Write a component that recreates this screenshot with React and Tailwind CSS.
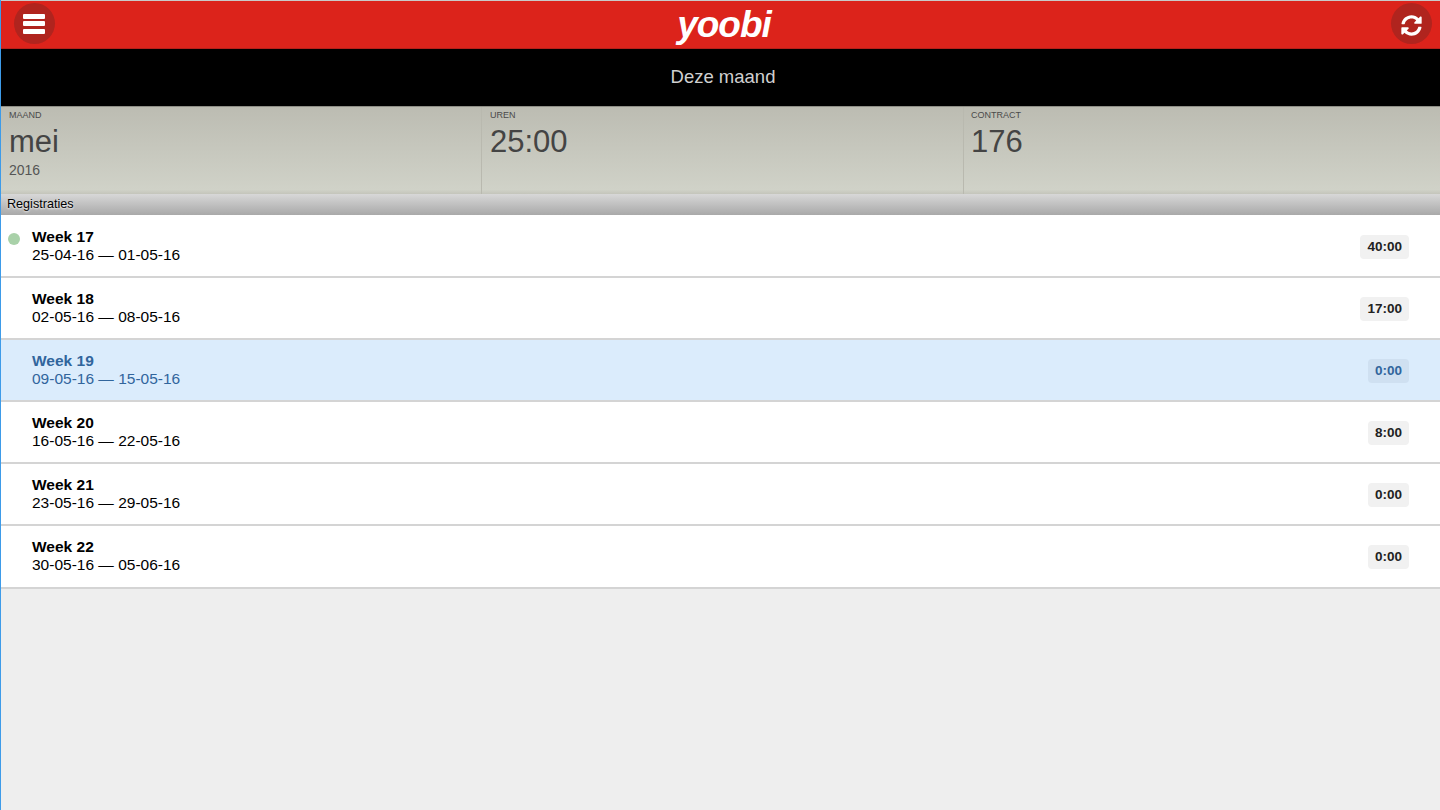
import { FaSyncAlt } from "react-icons/fa"

const weeks = [
  { name: "Week 17", range: "25-04-16 — 01-05-16", hours: "40:00", dot: true },
  { name: "Week 18", range: "02-05-16 — 08-05-16", hours: "17:00" },
  { name: "Week 19", range: "09-05-16 — 15-05-16", hours: "0:00", active: true },
  { name: "Week 20", range: "16-05-16 — 22-05-16", hours: "8:00" },
  { name: "Week 21", range: "23-05-16 — 29-05-16", hours: "0:00" },
  { name: "Week 22", range: "30-05-16 — 05-06-16", hours: "0:00" },
]

const stats = [
  { label: "MAAND", value: "mei", sub: "2016", box: "w-[481px] pl-[8px] border-r" },
  { label: "UREN", value: "25:00", box: "w-[482px] pl-[8px] border-r" },
  { label: "CONTRACT", value: "176", box: "flex-1 pl-[7px]" },
]

function RoundButton({ children }) {
  return (
    <button className="w-[41px] h-[41px] rounded-full bg-[#b0241e] flex items-center justify-center">
      {children}
    </button>
  )
}

function MenuIcon() {
  return (
    <div className="w-[22px] flex flex-col gap-[2.5px] -ml-[1px]">
      <div className="h-[5px] bg-white rounded-[1px]" />
      <div className="h-[5px] bg-white rounded-[1px]" />
      <div className="h-[5px] bg-white rounded-[1px]" />
    </div>
  )
}

export default function App() {
  return (
    <div className="min-h-screen h-[810px] overflow-hidden bg-[#eeeeee] border-l border-[#3d9be9] font-['Liberation_Sans',Arial,sans-serif]">
      <header className="h-[49px] border-t border-[#c9c9c9] border-b border-b-[#b5201a] bg-[#dc231b] pl-[13px] pr-[8px] pb-[2px] flex items-center justify-between">
        <RoundButton><MenuIcon /></RoundButton>
        <span className="text-white text-[37px] font-bold italic leading-[42px] tracking-[-1px] ml-[2px] mt-[2px]">yoobi</span>
        <RoundButton><FaSyncAlt className="text-white text-[21px] mt-[3px]" /></RoundButton>
      </header>

      <div className="h-[57px] bg-black flex items-center justify-center pl-[5px] pb-[2px] text-[18.5px] text-[#d0d0d0]">
        Deze maand
      </div>

      <div className="h-[88px] flex border-t border-[#8e8e86] bg-gradient-to-b from-[#bcbcb2] via-[#d0d2c8] via-95% to-[#c4c5bb]">
        {stats.map((s) => (
          <div key={s.label} className={`${s.box} pt-[3px] border-[#b9b9af] text-[#444]`}>
            <div className="text-[9px] leading-[11px] text-[#4a4a4a]">{s.label}</div>
            <div className="text-[31px] leading-[42px]">{s.value}</div>
            {s.sub && <div className="text-[14px] leading-[15px] text-[#555]">{s.sub}</div>}
          </div>
        ))}
      </div>

      <div className="h-[21px] pl-[6px] text-[12.6px] leading-[20px] text-black bg-gradient-to-b from-[#d8d8d8] to-[#a9a9a9] [text-shadow:0_1px_2px_#fff]">
        Registraties
      </div>

      <div className="bg-white pt-[1px]">
        {weeks.map((w) => (
          <div
            key={w.name}
            className={`relative h-[62px] last:h-[63px] border-b-2 border-[#d4d4d4] pl-[31px] pr-[31px] pt-[12px] flex justify-between ${w.active ? "bg-[#dbecfc] text-[#31659c]" : "text-black"}`}
          >
            {w.dot && <div className="absolute left-[7px] top-[17px] w-[12px] h-[12px] rounded-full bg-[#a9d1a9]" />}
            <div>
              <div className="text-[15.5px] leading-[18px] font-bold">{w.name}</div>
              <div className="text-[15.5px] leading-[18px]">{w.range}</div>
            </div>
            <div className={`self-start mt-[7px] h-[24px] px-[7px] rounded-[4px] text-[13.5px] leading-[24px] font-bold ${w.active ? "bg-[#cfe0f1]" : "bg-[#f1f1f1] text-[#222]"}`}>
              {w.hours}
            </div>
          </div>
        ))}
      </div>
    </div>
  )
}
